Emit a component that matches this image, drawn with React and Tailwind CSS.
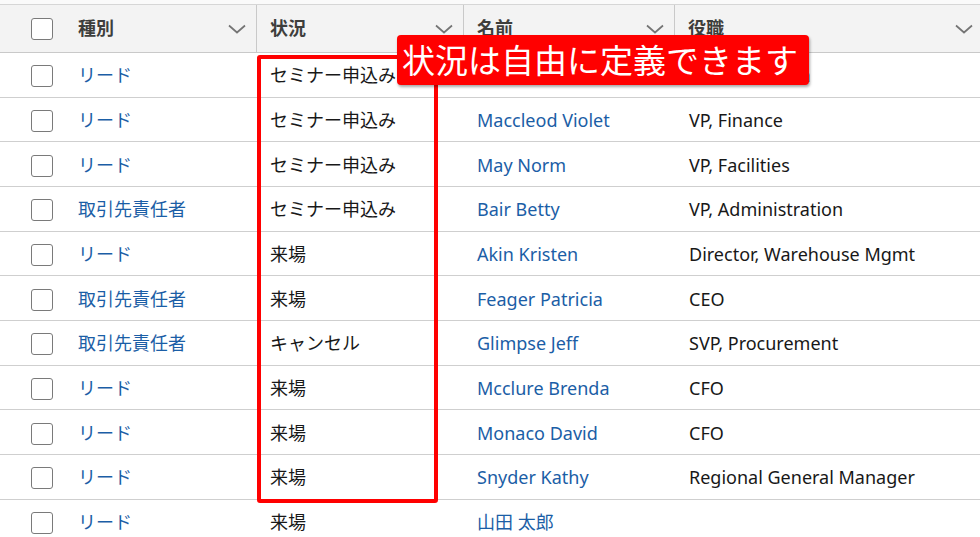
import React from "react";

const rows = [
  { type: "リード", status: "セミナー申込み", name: "", title: "VP, Production" },
  { type: "リード", status: "セミナー申込み", name: "Maccleod Violet", title: "VP, Finance" },
  { type: "リード", status: "セミナー申込み", name: "May Norm", title: "VP, Facilities" },
  { type: "取引先責任者", status: "セミナー申込み", name: "Bair Betty", title: "VP, Administration" },
  { type: "リード", status: "来場", name: "Akin Kristen", title: "Director, Warehouse Mgmt" },
  { type: "取引先責任者", status: "来場", name: "Feager Patricia", title: "CEO" },
  { type: "取引先責任者", status: "キャンセル", name: "Glimpse Jeff", title: "SVP, Procurement" },
  { type: "リード", status: "来場", name: "Mcclure Brenda", title: "CFO" },
  { type: "リード", status: "来場", name: "Monaco David", title: "CFO" },
  { type: "リード", status: "来場", name: "Snyder Kathy", title: "Regional General Manager" },
  { type: "リード", status: "来場", name: "山田 太郎", title: "" },
];

const Chevron = () => (
  <svg width="18" height="10" viewBox="0 0 18 10" fill="none">
    <path d="M1 1.5 9 8.5 17 1.5" stroke="#747474" strokeWidth="1.7" />
  </svg>
);

const Checkbox = () => (
  <div className="w-[22px] h-[22px] rounded-[3px] border-[1.5px] border-[#7a7a7a] bg-white" />
);

const HeaderCell = ({ label, last }) => (
  <div
    className={`flex items-center justify-between pl-[13px] ${
      last ? "pr-[7px]" : "pr-[10px] border-r border-[#c9c9c9]"
    }`}
  >
    <span className="font-bold text-[#3e3e3c]">{label}</span>
    <Chevron />
  </div>
);

const App = () => {
  return (
    <div
      className="relative w-[980px] h-[537px] overflow-hidden bg-white text-[18px] text-[#181818]"
      style={{ fontFamily: '"Noto Sans", "Noto Sans CJK JP", sans-serif' }}
    >
      <div className="h-[4px] bg-[#fafafa] border-b border-[#d6d6d6] box-content" />
      <div className="grid grid-cols-[65px_192px_207px_211px_1fr] h-[48px] bg-[#f3f3f3] border-b border-[#c9c9c9]">
        <div className="flex items-center pl-[31px]">
          <Checkbox />
        </div>
        <HeaderCell label="種別" />
        <HeaderCell label="状況" />
        <HeaderCell label="名前" />
        <HeaderCell label="役職" last />
      </div>
      {rows.map((row, index) => (
        <div
          key={index}
          className="grid grid-cols-[65px_192px_207px_211px_1fr] h-[44.67px] border-b border-[#cfcfcf]"
        >
          <div className="flex items-center pl-[31px] pt-[3px]">
            <Checkbox />
          </div>
          <div className="flex items-center pl-[13px] pt-[2px] text-[#1b5ea6]">{row.type}</div>
          <div className="flex items-center pl-[13px] pt-[2px]">{row.status}</div>
          <div className="flex items-center pl-[13px] pt-[2px] text-[#1b5ea6]">{row.name}</div>
          <div className="flex items-center pl-[14px] pt-[2px]">{row.title}</div>
        </div>
      ))}

      <div className="absolute left-[257px] top-[55px] w-[181px] h-[448px] border-4 border-[#ff0000] rounded-[3px]" />
      <div className="absolute left-[397px] top-[35px] w-[412px] h-[50px] bg-[#ff0000] rounded-[4px] shadow-[1px_2px_3px_rgba(0,0,0,0.35)] flex items-center pl-[5px] text-white text-[33px] leading-none">
        状況は自由に定義できます
      </div>
    </div>
  );
};

export default App;
